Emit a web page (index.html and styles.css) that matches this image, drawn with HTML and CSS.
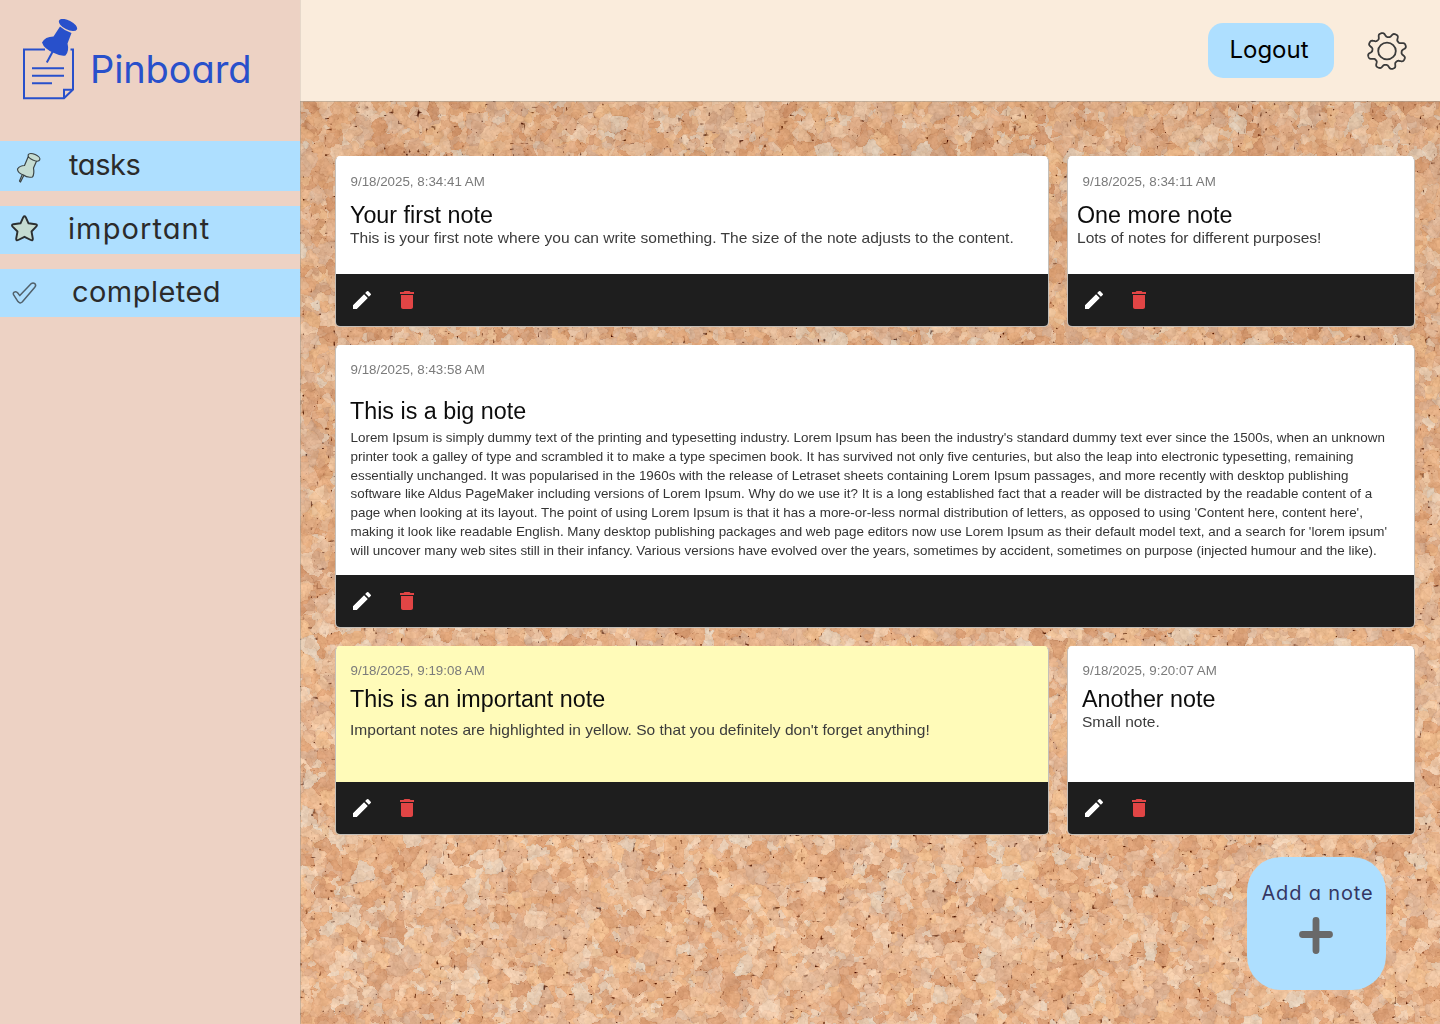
FILE: index.html
```html
<!DOCTYPE html>
<html lang="en">
<head>
<meta charset="utf-8">
<title>Pinboard</title>
<link rel="stylesheet" href="styles.css">
</head>
<body>
<svg class="defs" aria-hidden="true">
  <symbol id="pencil" viewBox="0 0 24 24"><path d="M3 17.25V21h3.75L17.81 9.94l-3.75-3.75L3 17.25zM20.71 7.04a1 1 0 0 0 0-1.41l-2.34-2.34a1 1 0 0 0-1.41 0l-1.83 1.83 3.75 3.75 1.83-1.83z"/></symbol>
  <symbol id="trash" viewBox="0 0 24 24"><path d="M6 19c0 1.1.9 2 2 2h8c1.100 0 2-.9 2-2V7H6v12zM19 4h-3.500l-1-1h-5l-1 1H5v2h14V4z"/></symbol>
</svg>
<div class="app">
  <aside class="sidebar">
    <div class="brand">
      <svg class="brand-icon" width="56" height="82" viewBox="0 0 56 82">
        <g fill="none" stroke="#2850cb" stroke-width="2">
          <path d="M23 30.500H2V79.200H42L51 70.500V30.500H48.500"/>
          <path d="M42 79V70.800H50.500"/>
          <path d="M10 49.800H42M10 57.300H42M10 64.900H30" transform="translate(0 -.6)"/>
        </g>
        <path d="M24.800 43.500L31 32" stroke="#2850cb" stroke-width="2" fill="none"/>
        <ellipse cx="46" cy="6" rx="10" ry="4.600" transform="rotate(27 46 6)" fill="#2850cb"/>
        <path d="M38 7.500Q43 12 49.500 14L45.500 24.500Q47.500 32 43.500 36.500Q39 37.500 32 34Q22 30 20 23.500Q23 17.500 31.500 17.500Z" fill="#2850cb"/>
      </svg>
      <span class="brand-name">Pinboard</span>
    </div>
    <nav class="menu">
      <a class="item tasks">
        <svg width="56" height="50" viewBox="0 0 56 50" fill="#c5dcd2" stroke="#3b4445" stroke-width="1.200" stroke-linejoin="round">
          <path d="M24 34l-3.500 7-1-1L22.500 33z"/>
          <path d="M28.500 15Q32 18.500 37 19L33.500 27Q34.500 33 32.500 36Q27 37 23.500 34Q17.500 32 17.500 28Q20 24.500 24.500 24.500Z"/>
          <ellipse cx="34" cy="16.300" rx="6.300" ry="3" transform="rotate(24 34 16.300)"/>
        </svg><span>tasks</span></a>
      <a class="item important">
        <svg width="56" height="48" viewBox="0 0 56 48" fill="#c5dcd2" stroke="#2b2f31" stroke-width="1.900" stroke-linejoin="round">
          <path d="M23.300 11.200Q24.500 9.200 25.700 11.200L28.500 17.300L35.500 18.200Q38 18.800 36.200 20.600L31.500 25.500L32.800 32.500Q33 35 30.800 34L24.500 30.800L18.200 34Q16 35 16.200 32.500L17.500 25.500L12.600 20.600Q11 18.800 13.500 18.200L20.500 17.300Z"/>
        </svg><span>important</span></a>
      <a class="item completed">
        <svg width="56" height="48" viewBox="0 0 56 48" fill="none" stroke="#51616b" stroke-width="1.500" stroke-linejoin="round">
          <path d="M14.300 26.800Q12.300 24.500 14.200 23.200Q16.200 22 17.800 24L19.800 26.600L31.300 14.600Q33 13.200 34.800 14.600Q36.500 16.500 34.800 18.300L22.200 33Q20 35 18 32.600Z"/>
        </svg><span>completed</span></a>
    </nav>
  </aside>
  <header class="topbar">
    <button class="logout">Logout</button>
    <svg id="gear" class="gear" width="42" height="40" viewBox="-21 -20 42 40" fill="none" stroke="#3b3b3b" stroke-width="1.800" stroke-linejoin="round">
      <ellipse rx="8.800" ry="8.400"/>
      <path id="gear-rim" d=""/>
    </svg>
  </header>
  <main class="board">
    <canvas id="cork" class="cork" width="1140" height="924"></canvas>
    <section class="notes">
      <article class="note first">
        <div class="content"><time>9/18/2025, 8:34:41 AM</time><h2>Your first note</h2><p>This is your first note where you can write something. The size of the note adjusts to the content.</p></div>
        <footer><svg class="edit"><use href="#pencil"/></svg><svg class="delete"><use href="#trash"/></svg></footer>
      </article>
      <article class="note second">
        <div class="content"><time>9/18/2025, 8:34:11 AM</time><h2>One more note</h2><p>Lots of notes for different purposes!</p></div>
        <footer><svg class="edit"><use href="#pencil"/></svg><svg class="delete"><use href="#trash"/></svg></footer>
      </article>
      <article class="note big">
        <div class="content"><time>9/18/2025, 8:43:58 AM</time><h2>This is a big note</h2><p>Lorem Ipsum is simply dummy text of the printing and typesetting industry. Lorem Ipsum has been the industry's standard dummy text ever since the 1500s, when an unknown<br>printer took a galley of type and scrambled it to make a type specimen book. It has survived not only five centuries, but also the leap into electronic typesetting, remaining<br>essentially unchanged. It was popularised in the 1960s with the release of Letraset sheets containing Lorem Ipsum passages, and more recently with desktop publishing<br>software like Aldus PageMaker including versions of Lorem Ipsum. Why do we use it? It is a long established fact that a reader will be distracted by the readable content of a<br>page when looking at its layout. The point of using Lorem Ipsum is that it has a more-or-less normal distribution of letters, as opposed to using 'Content here, content here',<br>making it look like readable English. Many desktop publishing packages and web page editors now use Lorem Ipsum as their default model text, and a search for 'lorem ipsum'<br>will uncover many web sites still in their infancy. Various versions have evolved over the years, sometimes by accident, sometimes on purpose (injected humour and the like).</p></div>
        <footer><svg class="edit"><use href="#pencil"/></svg><svg class="delete"><use href="#trash"/></svg></footer>
      </article>
      <article class="note highlight">
        <div class="content"><time>9/18/2025, 9:19:08 AM</time><h2>This is an important note</h2><p>Important notes are highlighted in yellow. So that you definitely don't forget anything!</p></div>
        <footer><svg class="edit"><use href="#pencil"/></svg><svg class="delete"><use href="#trash"/></svg></footer>
      </article>
      <article class="note another">
        <div class="content"><time>9/18/2025, 9:20:07 AM</time><h2>Another note</h2><p>Small note.</p></div>
        <footer><svg class="edit"><use href="#pencil"/></svg><svg class="delete"><use href="#trash"/></svg></footer>
      </article>
    </section>
    <button class="add">
      <span>Add a note</span>
      <svg width="34" height="37" viewBox="0 0 34 37" stroke="#696969" stroke-width="6.800" stroke-linecap="round"><path d="M17 3.500V33.500M3.500 17.500H30.500"/></svg>
    </button>
  </main>
</div>
<script src="cork.js"></script>
</body>
</html>
```
FILE: styles.css
```css
* { box-sizing: border-box; }
body { margin: 0; font-family: "Liberation Sans", Arial, sans-serif; }
.defs { display: none; }
.app {
  display: grid;
  grid-template: 101px 923px / 300px 1140px;
  width: 1440px;
  height: 1024px;
  overflow: hidden;
}
.sidebar {
  grid-row: 1 / 3;
  background: #edd2c4;
  font-family: Inter, Lato, sans-serif;
  font-feature-settings: "cv11";
}
.brand { display: flex; height: 141px; padding: 19px 0 0 22px; }
.brand-icon { flex: none; }
.brand-name {
  margin: 23px 0 0 12px;
  font-size: 38px;
  line-height: 54px;
  letter-spacing: -.1px;
  color: #2850cb;
}
.menu { display: flex; flex-direction: column; gap: 15px; }
.item {
  display: flex;
  align-items: center;
  height: 48px;
  background: #aedfff;
  color: #2b2b2b;
  font-size: 29px;
  line-height: 40px;
}
.item svg { flex: none; }
.item span { margin: -2px 0 0 12px; }
.tasks { height: 50px; }
.tasks span { margin-left: 13px; letter-spacing: -.4px; }
.important span { letter-spacing: 1.1px; }
.completed span { margin-left: 16px; letter-spacing: .45px; }
.topbar {
  display: flex;
  align-items: center;
  padding: 0 32px 0 908px;
  background: #faecdc;
  border-left: 1px solid #e6d8ca;
}
.logout {
  width: 126px;
  height: 55px;
  padding: 0 4px 2px 0;
  border: 0;
  border-radius: 15px;
  background: #aedfff;
  color: #000;
  font: 24px Inter, Lato, sans-serif;
  font-feature-settings: "cv11";
}
.topbar .logout { margin-left: -1px; }
.gear { margin-left: 32px; }
.board {
  position: relative;
  padding: 55px 25px 0 35px;
  background: #deb08a;
}
.cork { position: absolute; inset: 0; }
.notes {
  position: relative;
  display: grid;
  grid-template-columns: 714px 348px;
  grid-template-rows: 171px 283px 189px;
  gap: 18px;
}
.note {
  display: flex;
  flex-direction: column;
  overflow: hidden;
  border: 1px solid #c4bfb9;
  border-top-color: #fff;
  border-radius: 5px;
  background: #fff;
}
.big { grid-column: 1 / 3; }
.highlight { background: #fffbb9; border-top-color: #fffbb9; }
.content { flex: 1; padding: 16px 14px 0; white-space: nowrap; }
.big .content, .highlight .content, .another .content { padding-top: 15px; }
time { display: block; padding-left: .5px; font-size: 13.35px; line-height: 18px; color: #7b7b7b; }
h2 { margin: 11px 0 0; font-size: 23.3px; line-height: 26px; font-weight: 400; color: #0c0c0c; }
p {
  width: max-content;
  margin: 0;
  font-size: 14.5px;
  line-height: 20px;
  color: #3c3c3c;
  transform: scaleX(1.0727);
  transform-origin: 0 0;
}
.second h2, .second p { margin-left: -5px; }
.big h2 { margin-top: 19px; }
.big p {
  margin: 5px 0 0 .5px;
  font-size: 13.417px;
  line-height: 18.750px;
  color: #343434;
  transform: none;
}
.highlight h2, .another h2 { margin-top: 6px; }
.highlight p { margin-top: 8px; }
footer {
  display: flex;
  align-items: center;
  gap: 21px;
  flex: none;
  height: 52px;
  padding-left: 13.5px;
  background: #1e1e1e;
}
footer svg { width: 24px; height: 24px; }
.edit { fill: #fff; }
.delete { fill: #e14545; }
.add {
  position: absolute;
  left: 947px;
  top: 756px;
  display: flex;
  flex-direction: column;
  align-items: center;
  width: 139px;
  height: 133px;
  padding: 22px 1px 0 0;
  border: 0;
  border-radius: 34px;
  background: #aedfff;
  color: #343763;
  font: 20px/28px Inter, Lato, sans-serif;
  font-feature-settings: "cv11";
}
.add svg { margin-top: 10px; }
.add span { margin-left: 3px; white-space: nowrap; letter-spacing: .85px; }
```
FILE: cork.js
```js
// Eight-toothed rim of the settings gear
(function () {
  const pts = [];
  for (let i = 0; i < 240; i++) {
    const t = i / 240 * Math.PI * 2;
    const w = Math.cos(8 * (t + 0.31));
    const r = 16.9 + 2.4 * Math.tanh(1.8 * w) / Math.tanh(1.8);
    pts.push((r * Math.cos(t) * 1.01).toFixed(2) + ' ' + (r * Math.sin(t) * 0.96).toFixed(2));
  }
  document.getElementById('gear-rim').setAttribute('d', 'M' + pts.join('L') + 'Z');
})();

// Cork texture: irregular granules with soft seams and dark pores
(function () {
  const canvas = document.getElementById('cork');
  const ctx = canvas.getContext('2d');
  const W = canvas.width, H = canvas.height;
  function hash(x, y, s) {
    let h = Math.imul(x, 374761393) + Math.imul(y, 668265263) + Math.imul(s, 1442695041);
    h = Math.imul(h ^ (h >>> 13), 1274126177);
    h = Math.imul(h ^ (h >>> 15), 2246822519);
    return ((h ^ (h >>> 16)) >>> 0) / 4294967296;
  }
  function noise(x, y, s) {
    const xi = Math.floor(x), yi = Math.floor(y);
    let u = x - xi, v = y - yi;
    u = u * u * (3 - 2 * u); v = v * v * (3 - 2 * v);
    const a = hash(xi, yi, s), b = hash(xi + 1, yi, s), c = hash(xi, yi + 1, s), d = hash(xi + 1, yi + 1, s);
    return a + (b - a) * u + (c - a + (a - b - c + d) * u) * v;
  }
  const tones = [[226,170,127],[233,184,143],[218,158,114],[236,196,161],[228,178,141],[211,151,110],[238,204,174],[222,181,151],[237,188,141],[230,175,130],[214,170,139],[228,207,185]];
  function cells(px, py, size, s) {
    const gx = px / size, gy = py / size, xi = Math.floor(gx), yi = Math.floor(gy);
    let d1 = 9, d2 = 9, id = 0, kx = 0, ky = 0;
    for (let j = -1; j <= 1; j++) for (let i = -1; i <= 1; i++) {
      const cx = xi + i, cy = yi + j;
      const dx = cx + hash(cx, cy, s) - gx, dy = cy + hash(cx, cy, s + 1) - gy;
      const d = Math.sqrt(dx * dx + dy * dy);
      if (d < d1) { d2 = d1; d1 = d; id = hash(cx, cy, s + 2); kx = cx; ky = cy; } else if (d < d2) d2 = d;
    }
    return [d2 - d1, id, hash(kx, ky, s + 3)];
  }
  const img = ctx.createImageData(W, H), D = img.data;
  for (let y = 0; y < H; y++) for (let x = 0; x < W; x++) {
    const wx = x + 5 * (noise(x / 6, y / 6, 1) - 0.5) + 2 * noise(x / 2.5, y / 2.5, 4);
    const wy = y + 5 * (noise(x / 6, y / 6, 2) - 0.5) + 2 * noise(x / 2.5, y / 2.5, 5);
    const a = cells(wx, wy, 15, 10), b = cells(wx, wy, 7, 30);
    const c1 = tones[Math.floor(a[1] * tones.length)], c2 = tones[Math.floor(b[1] * tones.length)];
    const fine = (noise(x / 1.7, y / 1.7, 7) - 0.5) * 12 + (noise(x / 5, y / 5, 8) - 0.5) * 18;
    const edge = Math.max(0, 1 - a[0] / 0.16) * 16 * noise(x / 7, y / 7, 9) + Math.max(0, 1 - b[0] / 0.2) * 7;
    const pore = Math.max(0, noise(x / 2.8, y / 2.8, 50) - 0.86) * Math.max(0, 1 - a[0] / 0.4) * 1100;
    const low = -Math.max(0, 1 - y / 700) * 10 + 5;
    const m = a[2] > 0.5 ? 0.25 : 0.65, dk = Math.min(150, edge + pore), k = (y * W + x) * 4;
    D[k] = c1[0] * (1 - m) + c2[0] * m + fine + low - dk;
    D[k + 1] = c1[1] * (1 - m) + c2[1] * m + fine + low - dk * 1.05;
    D[k + 2] = c1[2] * (1 - m) + c2[2] * m + fine + low - dk * 0.95;
    D[k + 3] = 255;
  }
  ctx.putImageData(img, 0, 0);
  // Soft shade where the board meets the top bar and the sidebar
  ctx.fillStyle = 'rgba(165,160,150,.55)';
  ctx.fillRect(0, 0, W, 1);
  ctx.fillRect(0, 0, 1, H);
})();
```
